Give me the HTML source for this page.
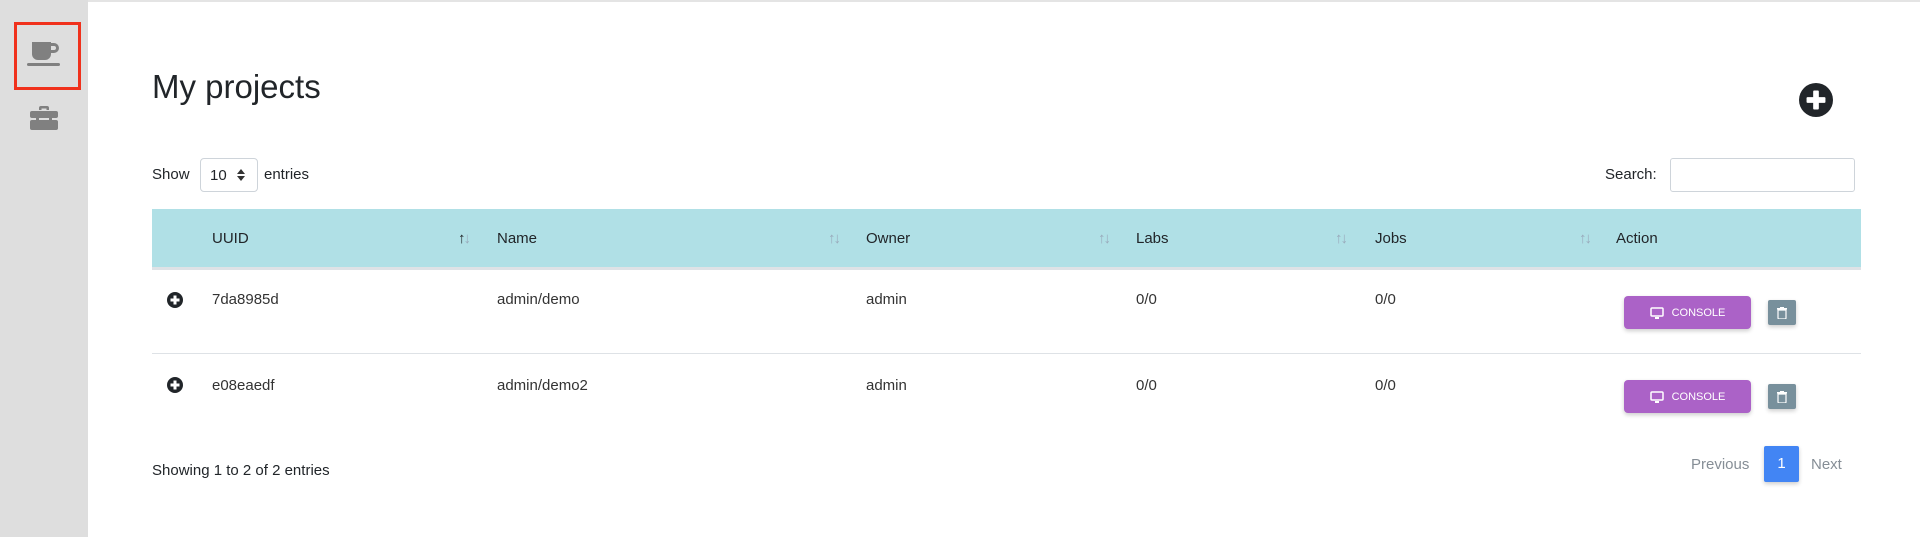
<!DOCTYPE html>
<html><head><style>
*{box-sizing:border-box;margin:0;padding:0}
body{width:1920px;height:537px;background:#fff;font-family:"Liberation Sans",sans-serif;color:#212529;position:relative;overflow:hidden;font-size:15px}
.a{position:absolute;white-space:nowrap}
.side{left:0;top:0;width:88px;height:537px;background:#dedede}
.topl{left:88px;top:0;width:1832px;height:2px;background:#e4e4e4}
.hdr{left:152px;top:209px;width:1709px;height:58px;background:#b0e0e6}
.hb{left:152px;top:267px;width:1709px;height:3px;background:#dee2e6}
.sep{left:152px;top:353px;width:1709px;height:1px;background:#dee2e6}
.th{top:230px;font-size:15px}
.td{font-size:15px;color:#333}
.sort{top:230px;font-size:15px;color:#9ab;letter-spacing:-2px}
.btn{left:1624px;width:127px;height:33px;background:#ab62c7;border-radius:4px;color:#fff;font-size:11px;display:flex;align-items:center;justify-content:center;gap:8px;box-shadow:0 2px 4px rgba(0,0,0,.2)}
.tr{left:1768px;width:28px;height:25px;background:#78909c;border-radius:2px;display:flex;align-items:center;justify-content:center;box-shadow:0 2px 4px rgba(0,0,0,.2)}
</style></head><body>
<div class="a side"></div>
<div class="a topl"></div>
<div class="a" style="left:14px;top:22px;width:67px;height:68px;border:3px solid #f0311c"></div>
<svg class="a" style="left:27px;top:42px" width="34" height="26" viewBox="0 0 34 26"><path d="M5 0h19v12a6 6 0 0 1-6 6H11a6 6 0 0 1-6-6z" fill="#808080"/><path d="M24 1h3a5 5 0 0 1 0 10h-3v-3h3a2 2 0 0 0 0-4h-3z" fill="#808080"/><rect x="0" y="21" width="33" height="3" rx="1.5" fill="#808080"/></svg>
<svg class="a" style="left:30px;top:106px" width="28" height="24" viewBox="0 0 28 24"><path d="M9 4V2a2 2 0 0 1 2-2h6a2 2 0 0 1 2 2v2h-2.5V2.5h-5V4z" fill="#808080"/><rect x="0" y="5" width="28" height="7" rx="2" fill="#808080"/><rect x="0" y="14" width="28" height="10" rx="2" fill="#808080"/><rect x="6" y="11" width="3" height="4" fill="#808080"/><rect x="19" y="11" width="3" height="4" fill="#808080"/></svg>
<div class="a" style="left:152px;top:68px;font-size:33px;color:#212529">My projects</div>
<svg class="a" style="left:1799px;top:83px" width="34" height="34" viewBox="0 0 36 36"><circle cx="18" cy="18" r="18" fill="#212529"/><rect x="15" y="8" width="6" height="20" rx="1" fill="#fff"/><rect x="8" y="15" width="20" height="6" rx="1" fill="#fff"/></svg>
<div class="a" style="left:152px;top:166px">Show</div>
<div class="a" style="left:200px;top:158px;width:58px;height:34px;border:1px solid #ced4da;border-radius:4px;font-size:15px;padding:8px 0 0 9px">10<svg style="margin-left:10px;vertical-align:-1px" width="8" height="12" viewBox="0 0 8 12"><path d="M4 0L8 5H0z M4 12L0 7h8z" fill="#333"/></svg></div>
<div class="a" style="left:264px;top:166px">entries</div>
<div class="a" style="left:1605px;top:166px">Search:</div>
<div class="a" style="left:1670px;top:158px;width:185px;height:34px;border:1px solid #ced4da;border-radius:3px"></div>
<div class="a hdr"></div><div class="a hb"></div><div class="a sep"></div>
<div class="a th" style="left:212px">UUID</div>
<div class="a sort" style="left:458px"><span style="color:#212529">↑</span>↓</div>
<div class="a th" style="left:497px">Name</div><div class="a sort" style="left:828px">↑↓</div>
<div class="a th" style="left:866px">Owner</div><div class="a sort" style="left:1098px">↑↓</div>
<div class="a th" style="left:1136px">Labs</div><div class="a sort" style="left:1335px">↑↓</div>
<div class="a th" style="left:1375px">Jobs</div><div class="a sort" style="left:1579px">↑↓</div>
<div class="a th" style="left:1616px">Action</div>
<svg class="a" style="left:167px;top:292px" width="16" height="16" viewBox="0 0 16 16"><circle cx="8" cy="8" r="8" fill="#212529"/><rect x="6.5" y="3.5" width="3" height="9" fill="#fff"/><rect x="3.5" y="6.5" width="9" height="3" fill="#fff"/></svg>
<div class="a td" style="left:212px;top:291px">7da8985d</div>
<div class="a td" style="left:497px;top:291px">admin/demo</div>
<div class="a td" style="left:866px;top:291px">admin</div>
<div class="a td" style="left:1136px;top:291px">0/0</div>
<div class="a td" style="left:1375px;top:291px">0/0</div>
<svg class="a" style="left:167px;top:377px" width="16" height="16" viewBox="0 0 16 16"><circle cx="8" cy="8" r="8" fill="#212529"/><rect x="6.5" y="3.5" width="3" height="9" fill="#fff"/><rect x="3.5" y="6.5" width="9" height="3" fill="#fff"/></svg>
<div class="a td" style="left:212px;top:377px">e08eaedf</div>
<div class="a td" style="left:497px;top:377px">admin/demo2</div>
<div class="a td" style="left:866px;top:377px">admin</div>
<div class="a td" style="left:1136px;top:377px">0/0</div>
<div class="a td" style="left:1375px;top:377px">0/0</div>
<div class="a btn" style="top:296px"><svg width="14" height="12" viewBox="0 0 14 12"><rect x="1" y="1" width="12" height="8" rx="1" fill="none" stroke="#fff" stroke-width="1.5"/><rect x="5" y="10" width="4" height="2" fill="#fff"/></svg>CONSOLE</div>
<div class="a tr" style="top:300px"><svg width="10" height="12" viewBox="0 0 10 12"><rect x="0" y="1" width="10" height="1.5" fill="#fff"/><rect x="3" y="0" width="4" height="1.5" fill="#fff"/><path d="M1 3h8v8a1 1 0 0 1-1 1H2a1 1 0 0 1-1-1z" fill="none" stroke="#fff" stroke-width="1.2"/></svg></div>
<div class="a btn" style="top:380px"><svg width="14" height="12" viewBox="0 0 14 12"><rect x="1" y="1" width="12" height="8" rx="1" fill="none" stroke="#fff" stroke-width="1.5"/><rect x="5" y="10" width="4" height="2" fill="#fff"/></svg>CONSOLE</div>
<div class="a tr" style="top:384px"><svg width="10" height="12" viewBox="0 0 10 12"><rect x="0" y="1" width="10" height="1.5" fill="#fff"/><rect x="3" y="0" width="4" height="1.5" fill="#fff"/><path d="M1 3h8v8a1 1 0 0 1-1 1H2a1 1 0 0 1-1-1z" fill="none" stroke="#fff" stroke-width="1.2"/></svg></div>
<div class="a" style="left:152px;top:462px">Showing 1 to 2 of 2 entries</div>
<div class="a" style="left:1691px;top:456px;color:#868e96">Previous</div>
<div class="a" style="left:1764px;top:446px;width:35px;height:36px;background:#4285f4;color:#fff;border-radius:2px;text-align:center;line-height:36px;box-shadow:0 2px 4px rgba(0,0,0,.2)">1</div>
<div class="a" style="left:1811px;top:456px;color:#868e96">Next</div>
</body></html>
